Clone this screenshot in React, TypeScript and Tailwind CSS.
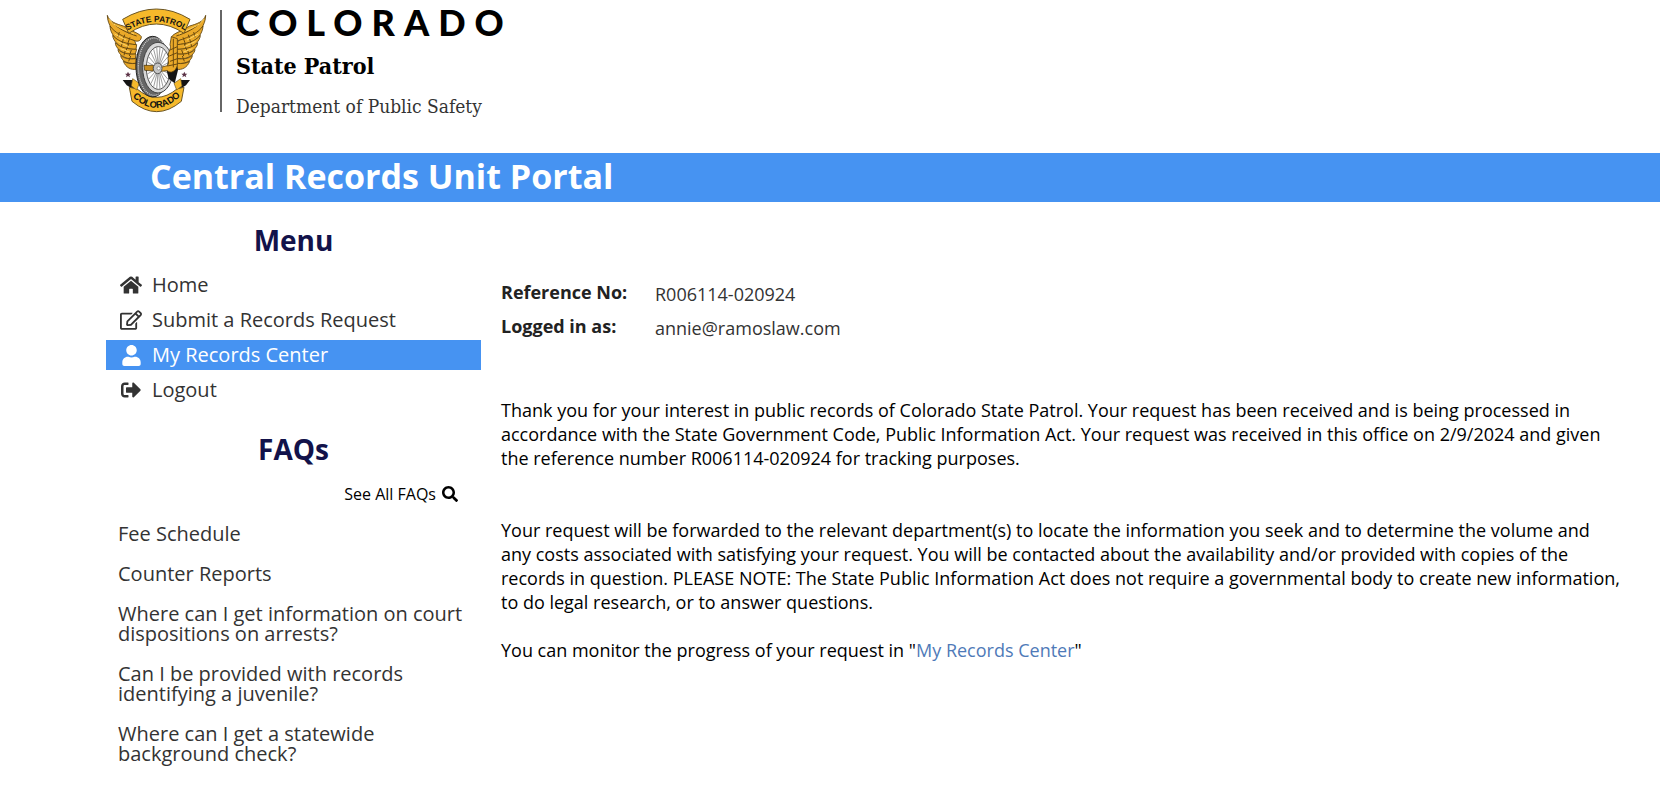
import type { ReactNode } from "react";
import { FaHome, FaRegEdit, FaSearch, FaSignOutAlt, FaUser } from "react-icons/fa";

const menu: { label: string; icon: ReactNode; active?: boolean }[] = [
  { label: "Home", icon: <FaHome size={22} /> },
  { label: "Submit a Records Request", icon: <FaRegEdit size={22} /> },
  { label: "My Records Center", icon: <FaUser size={21} />, active: true },
  { label: "Logout", icon: <FaSignOutAlt size={20} /> },
];

const faqs = [
  "Fee Schedule",
  "Counter Reports",
  "Where can I get information on court dispositions on arrests?",
  "Can I be provided with records identifying a juvenile?",
  "Where can I get a statewide background check?",
];

const spokes = Array.from({ length: 22 }, (_, i) => {
  const a = (i * Math.PI) / 11;
  return { x: 205 + 34 * Math.cos(a), y: 204 + 62 * Math.sin(a) };
});

const feathers = [
  "M52 46 C58 66 80 72 100 78 C126 94 148 100 154 110 C154 122 144 126 134 122 C110 118 80 108 66 88 C57 74 52 60 52 46 Z",
  "M60 78 C74 98 98 110 134 122 L138 134 C112 132 86 128 74 112 C66 102 60 90 60 78 Z",
  "M68 106 C84 124 108 132 140 134 L138 148 C114 148 92 144 82 132 C74 124 68 114 68 106 Z",
  "M76 128 C90 142 112 148 140 148 L136 162 C116 164 98 160 88 150 C80 142 76 136 76 128 Z",
  "M84 148 C96 160 114 164 138 162 L136 176 C118 178 104 174 94 166 C88 160 84 154 84 148 Z",
  "M92 166 C102 176 118 178 138 176 L138 190 C122 192 108 188 100 182 C96 176 92 172 92 166 Z",
  "M100 184 C110 190 122 192 138 190 L138 208 C124 210 108 204 100 184 Z",
];

function Wing() {
  return (
    <g strokeLinejoin="round">
      {feathers.map((d) => (
        <path key={d} d={d} fill="#eaa929" stroke="#5a400c" strokeWidth="2.5" />
      ))}
      <path
        fill="none"
        stroke="#6b4a0e"
        strokeWidth="3"
        d="M66 66 C84 86 110 98 140 108 M88 96 L84 112 M104 104 L98 124 M120 112 L112 134 M98 124 L94 140 M116 132 L108 152 M106 150 L102 166 M124 150 L118 168 M122 168 L116 184"
      />
      <path fill="none" stroke="#fbd468" strokeWidth="3" d="M58 58 C72 80 98 84 132 102 M74 102 L108 120 M82 124 L116 140 M92 146 L118 156" />
    </g>
  );
}

function Seal() {
  return (
    <svg viewBox="48 24 303 315" className="h-[105px] w-[101px]" role="img" aria-label="Colorado State Patrol">
      <defs>
        <path id="arcTop" d="M106 96 Q199 34 292 96" />
        <path id="arcBottom" d="M124 286 Q196 362 276 284" />
      </defs>
      <Wing />
      <g transform="translate(399 0) scale(-1 1)">
        <Wing />
      </g>
      <path d="M98 58 Q199 -4 300 58 L282 100 Q199 44 116 100 Z" fill="#f6b92b" stroke="#6b5523" strokeWidth="3" />
      <path d="M98 240 L128 240 L134 262 L120 280 L120 262 L110 256 Z M300 240 L270 240 L264 262 L278 280 L278 262 L288 256 Z" fill="#151515" />
      <path d="M118 262 L140 266 Q200 318 262 266 L282 262 L274 304 Q200 366 126 304 Z" fill="#f6b92b" stroke="#6b5523" strokeWidth="3" />
      <path d="M128 236 L148 250 L140 270 L124 258 Z M272 236 L252 250 L260 270 L276 258 Z" fill="#f6b92b" stroke="#6b5523" strokeWidth="2" />
      <ellipse cx="188" cy="200" rx="50" ry="91" fill="#666" stroke="#222" strokeWidth="3" />
      <ellipse cx="192" cy="200" rx="47" ry="86" fill="none" stroke="#d0d0d0" strokeWidth="4" strokeDasharray="3 3" />
      <ellipse cx="204" cy="203" rx="46" ry="76" fill="#d8d8d8" stroke="#444" strokeWidth="3" />
      <ellipse cx="205" cy="204" rx="36" ry="64" fill="#fff" stroke="#555" strokeWidth="3" />
      {spokes.map((s, i) => (
        <line key={i} x1="205" y1="204" x2={s.x} y2={s.y} stroke="#8a8a8a" strokeWidth="2.5" />
      ))}
      <path d="M238 150 L254 170 L264 210 L254 250 L236 236 L230 212 Z" fill="#151515" />
      <path d="M162 196 L190 196 L190 213 L164 211 Z" fill="#c98d1c" stroke="#3b2a08" strokeWidth="2" />
      <path
        d="M244 110 L262 116 L262 196 C258 214 242 222 232 212 L212 214 L212 202 L232 197 C240 186 230 178 236 168 C232 154 246 148 240 134 Z"
        fill="#eaa929"
        stroke="#5a400c"
        strokeWidth="2.5"
      />
      <path d="M240 150 L262 140 M238 168 L262 158 M240 184 L262 176 M232 198 L262 192 M250 116 L250 202" fill="none" stroke="#6b4a0e" strokeWidth="3" />
      <ellipse cx="203" cy="205" rx="13" ry="16" fill="#c6c6c6" stroke="#555" strokeWidth="3" />
      <circle cx="206" cy="205" r="5" fill="#fff" stroke="#777" strokeWidth="2" />
      {[114, 283].map((x) => (
        <path
          key={x}
          transform={`translate(${x} 224)`}
          d="M0 -9 L3 -3 L9 -3 L4 2 L6 8 L0 4 L-6 8 L-4 2 L-9 -3 L-3 -3 Z"
          fill="#5d3448"
        />
      ))}
      <text fontFamily="Liberation Sans, sans-serif" fontWeight="700" fontSize="25" fill="#111" textAnchor="middle">
        <textPath href="#arcTop" startOffset="50%">STATE PATROL</textPath>
      </text>
      <text fontFamily="Liberation Sans, sans-serif" fontWeight="700" fontSize="28" fill="#111" textAnchor="middle">
        <textPath href="#arcBottom" startOffset="50%">COLORADO</textPath>
      </text>
    </svg>
  );
}

export default function App() {
  return (
    <div className="min-h-screen bg-white font-['Open_Sans',sans-serif] text-lg leading-6 text-black">
      <header className="flex h-[153px] items-start pl-[106px] pt-2">
        <Seal />
        <div className="ml-[13px] mt-0.5 h-[102px] w-0.5 bg-[#666]" />
        <div className="ml-[14px] whitespace-nowrap">
          <div className="font-[Lato,sans-serif] text-[36px] font-black leading-[28px] tracking-[9px]">COLORADO</div>
          <div className="mt-[18px] font-['DejaVu_Serif_Condensed','DejaVu_Serif',serif] text-[23px] font-bold leading-6">
            State Patrol
          </div>
          <div className="mt-4 font-['DejaVu_Serif_Condensed','DejaVu_Serif',serif] text-[19px] leading-6 text-[#333]">
            Department of Public Safety
          </div>
        </div>
      </header>

      <div className="h-[49px] bg-[#4693f2] pl-[150px]">
        <h1 className="text-[34px] font-bold leading-[46px] text-white">Central Records Unit Portal</h1>
      </div>

      <div className="flex pl-[106px] pr-[36px]">
        <aside className="w-[375px] shrink-0">
          <h2 className="mt-[18px] text-center text-[28px] font-bold leading-10 text-[#12124a]">Menu</h2>
          <nav className="mt-[10px] flex flex-col gap-[5px]">
            {menu.map((m) => (
              <a
                key={m.label}
                href="#"
                className={
                  m.active
                    ? "flex h-[30px] items-center bg-[#4693f2] pl-[13px] text-xl text-white"
                    : "flex h-[30px] items-center pl-[13px] text-xl text-[#333]"
                }
              >
                <span className="flex w-6 justify-center">{m.icon}</span>
                <span className="ml-[9px]">{m.label}</span>
              </a>
            ))}
          </nav>
          <h2 className="mt-6 text-center text-[28px] font-bold leading-10 text-[#12124a]">FAQs</h2>
          <div className="mt-[13px] flex justify-end pr-[23px]">
            <a href="#" className="flex items-center gap-1.5 text-base">
              See All FAQs <FaSearch size={16} />
            </a>
          </div>
          <ul className="mt-[18px] flex flex-col gap-5 px-3 text-xl leading-5 text-[#333]">
            {faqs.map((f) => (
              <li key={f}>
                <a href="#" className="block">{f}</a>
              </li>
            ))}
          </ul>
        </aside>

        <main className="min-w-0 flex-1 pl-5">
          <dl className="mt-[78px] grid grid-cols-[154px_1fr] gap-y-2 text-[#222]">
            <dt className="font-bold">Reference No:</dt>
            <dd className="pt-0.5 text-[#333]">R006114-020924</dd>
            <dt className="font-bold">Logged in as:</dt>
            <dd className="pt-0.5 text-[#333]">annie@ramoslaw.com</dd>
          </dl>
          <p className="mt-[58px]">
            Thank you for your interest in public records of Colorado State Patrol. Your request has been received and is being
            processed in accordance with the State Government Code, Public Information Act. Your request was received in this
            office on 2/9/2024 and given the reference number R006114-020924 for tracking purposes.
          </p>
          <p className="mt-12">
            Your request will be forwarded to the relevant department(s) to locate the information you seek and to determine the
            volume and any costs associated with satisfying your request. You will be contacted about the availability and/or
            provided with copies of the records in question. PLEASE NOTE: The State Public Information Act does not require a
            governmental body to create new information, to do legal research, or to answer questions.
          </p>
          <p className="mt-6">
            You can monitor the progress of your request in "
            <a href="#" className="text-[#4f7ab8]">My Records Center</a>"
          </p>
        </main>
      </div>
    </div>
  );
}
